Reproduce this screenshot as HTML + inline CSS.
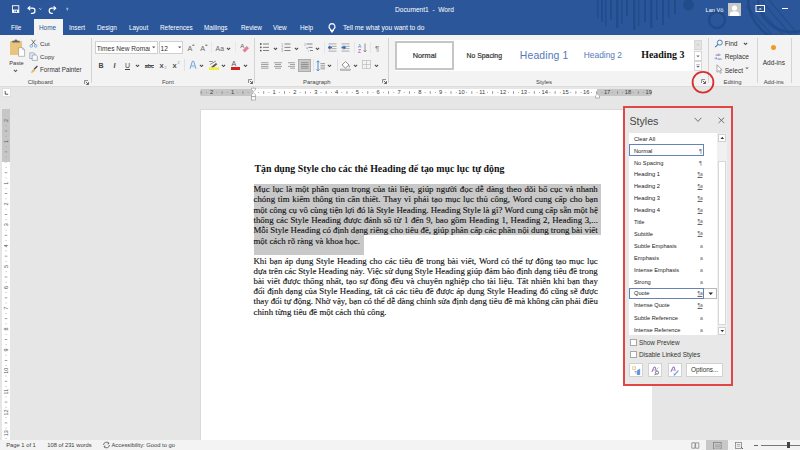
<!DOCTYPE html><html><head><meta charset='utf-8'><style>html,body{margin:0;padding:0}body{width:800px;height:450px;overflow:hidden;position:relative;background:#e6e6e6;font-family:'Liberation Sans',sans-serif}</style></head><body><div style="position:absolute;left:0px;top:0px;width:800px;height:35px;background:#2b579a"></div><svg style="position:absolute;left:560px;top:0px;" width="240" height="35" viewBox="0 0 240 35"><g fill="#214a88" opacity="0.9"><rect x="37" y="0" width="1.5" height="18"/><rect x="41" y="0" width="2" height="22"/><rect x="45" y="0" width="1.5" height="26"/><rect x="50" y="0" width="2" height="20"/><rect x="56" y="0" width="2.5" height="28"/><rect x="61" y="0" width="1.5" height="24"/><rect x="66" y="0" width="2" height="16"/><rect x="73" y="0" width="2.5" height="30"/><rect x="78" y="0" width="1.5" height="26"/><rect x="84" y="0" width="2" height="22"/><rect x="90" y="0" width="2.5" height="28"/><rect x="96" y="0" width="1.5" height="20"/><rect x="102" y="0" width="2" height="25"/><rect x="108" y="0" width="1.5" height="18"/><rect x="114" y="0" width="2" height="14"/><circle cx="128.5" cy="5" r="5.5"/></g><g fill="none" stroke="#214a88" stroke-width="2.5" opacity="0.9"><circle cx="157" cy="20" r="8"/><circle cx="232" cy="-2" r="44"/><circle cx="232" cy="-2" r="34"/></g><g stroke="#214a88" stroke-width="1.3" opacity="0.7"><path d="M186 6l26 29M193 2l30 33M201 0l30 35M209 0l28 33"/></g></svg><svg style="position:absolute;left:11px;top:4px;" width="60" height="11" viewBox="0 0 60 11"><rect x="1.5" y="1.7" width="6.3" height="6.7" fill="none" stroke="#fff" stroke-width="0.9"/><rect x="1.5" y="5.6" width="6.3" height="2.8" fill="#fff"/><rect x="3.4" y="6.5" width="1" height="1.5" fill="#2b579a"/><rect x="5" y="6.5" width="1" height="1.5" fill="#2b579a"/><g fill="none" stroke="#fff" stroke-width="1.2" stroke-linecap="round"><path d="M17.2 4.2h4.2a2.6 2.6 0 0 1 0 5.2h-1"/><path d="M18.8 2.6l-1.6 1.6 1.6 1.6"/></g><path d="M28.3 4.3l1.1 1.1 1.1-1.1" fill="none" stroke="#fff" stroke-width="0.7"/><g fill="none" stroke="#fff" stroke-width="1.2" stroke-linecap="round"><path d="M44.6 4.2h-3.8a2.6 2.6 0 0 0 0 5.2h0.5"/><path d="M43 2.6l1.6 1.6-1.6 1.6"/></g><path d="M55.2 4.3h2.2" stroke="#fff" stroke-width="0.6"/><path d="M55.2 5.4h2.2l-1.1 1.2z" fill="#fff"/></svg><div style="position:absolute;left:395px;top:6.30px;font-family:'Liberation Sans',sans-serif;font-size:6.6px;line-height:7px;color:#fff;font-weight:400;white-space:pre;">Document1  -  Word</div><div style="position:absolute;left:705.6px;top:6.80px;font-family:'Liberation Sans',sans-serif;font-size:5.6px;line-height:6px;color:#fff;font-weight:400;white-space:pre;">Lan Vô</div><div style="position:absolute;left:728px;top:2.5px;width:13px;height:13.5px;background:#c8c8c8"></div><svg style="position:absolute;left:728px;top:2.5px;" width="13" height="13.5" viewBox="0 0 13 13.5"><circle cx="6.5" cy="5" r="2.6" fill="#fff"/><path d="M1.8 13.5v-2.2a4.7 3 0 0 1 9.4 0v2.2z" fill="#fff"/></svg><svg style="position:absolute;left:755px;top:4px;" width="11" height="9" viewBox="0 0 11 9"><rect x="1" y="1.5" width="8.5" height="6" fill="none" stroke="#fff" stroke-width="1"/><path d="M3.5 5.5l1.7-1.5 1.7 1.5z" fill="#fff"/></svg><div style="position:absolute;left:782px;top:8px;width:6px;height:1px;background:#fff"></div><div style="position:absolute;left:34px;top:19px;width:29px;height:16px;background:#f3f3f3"></div><div style="position:absolute;left:11px;top:24.20px;font-family:'Liberation Sans',sans-serif;font-size:6.4px;line-height:7px;color:#fff;font-weight:400;white-space:pre;">File</div><div style="position:absolute;left:39px;top:24.20px;font-family:'Liberation Sans',sans-serif;font-size:6.4px;line-height:7px;color:#2b579a;font-weight:400;white-space:pre;">Home</div><div style="position:absolute;left:69px;top:24.20px;font-family:'Liberation Sans',sans-serif;font-size:6.4px;line-height:7px;color:#fff;font-weight:400;white-space:pre;">Insert</div><div style="position:absolute;left:97px;top:24.20px;font-family:'Liberation Sans',sans-serif;font-size:6.4px;line-height:7px;color:#fff;font-weight:400;white-space:pre;">Design</div><div style="position:absolute;left:129px;top:24.20px;font-family:'Liberation Sans',sans-serif;font-size:6.4px;line-height:7px;color:#fff;font-weight:400;white-space:pre;">Layout</div><div style="position:absolute;left:160px;top:24.20px;font-family:'Liberation Sans',sans-serif;font-size:6.4px;line-height:7px;color:#fff;font-weight:400;white-space:pre;">References</div><div style="position:absolute;left:204px;top:24.20px;font-family:'Liberation Sans',sans-serif;font-size:6.4px;line-height:7px;color:#fff;font-weight:400;white-space:pre;">Mailings</div><div style="position:absolute;left:241px;top:24.20px;font-family:'Liberation Sans',sans-serif;font-size:6.4px;line-height:7px;color:#fff;font-weight:400;white-space:pre;">Review</div><div style="position:absolute;left:273px;top:24.20px;font-family:'Liberation Sans',sans-serif;font-size:6.4px;line-height:7px;color:#fff;font-weight:400;white-space:pre;">View</div><div style="position:absolute;left:300px;top:24.20px;font-family:'Liberation Sans',sans-serif;font-size:6.4px;line-height:7px;color:#fff;font-weight:400;white-space:pre;">Help</div><svg style="position:absolute;left:327px;top:22px;" width="10" height="11" viewBox="0 0 10 11"><path d="M5 1.6a3 3 0 0 0-1.9 5.3c.5.5.6.9.6 1.4h2.6c0-.5.1-.9.6-1.4A3 3 0 0 0 5 1.6z" fill="none" stroke="#fff" stroke-width="1.2"/><path d="M3.8 8.6h2.4v1.2l-0.6 0.6h-1.2l-0.6-0.6z" fill="#fff"/></svg><div style="position:absolute;left:343px;top:24.20px;font-family:'Liberation Sans',sans-serif;font-size:6.6px;line-height:7px;color:#fff;font-weight:400;white-space:pre;">Tell me what you want to do</div><div style="position:absolute;left:0px;top:35px;width:800px;height:51px;background:#f3f3f3"></div><div style="position:absolute;left:0px;top:86px;width:800px;height:1px;background:#dcdcdc"></div><svg style="position:absolute;left:8px;top:39px;" width="18" height="18" viewBox="0 0 18 18"><rect x="2" y="2" width="12" height="14" rx="0.6" fill="#ebc47c"/><path d="M4.2 3.6h7.4v-1.8h-2.2a1.5 1.2 0 0 0-3 0h-2.2z" fill="#666"/><path d="M10.6 8.7h4l2 2v6.6h-6z" fill="#fff" stroke="#8f8f8f" stroke-width="0.6"/><path d="M14.6 8.7v2h2" fill="none" stroke="#8f8f8f" stroke-width="0.5"/></svg><div style="position:absolute;left:9.2px;top:60.00px;font-family:'Liberation Sans',sans-serif;font-size:5.7px;line-height:6px;color:#333;font-weight:400;white-space:pre;">Paste</div><svg style="position:absolute;left:13.3px;top:69.0px;" width="5" height="3.5" viewBox="0 0 5 3.5"><path d="M0.9 0.9l1.6 1.6 1.6-1.6" fill="none" stroke="#555" stroke-width="1.05"/></svg><svg style="position:absolute;left:29px;top:39px;" width="9" height="9" viewBox="0 0 9 9"><path d="M2.6 0.8l3.8 5M6.4 0.8L2.6 5.8" stroke="#555" stroke-width="0.8" fill="none"/><circle cx="2.3" cy="6.9" r="1.3" fill="none" stroke="#5a8fd0" stroke-width="0.7"/><circle cx="6.7" cy="6.9" r="1.3" fill="none" stroke="#5a8fd0" stroke-width="0.7"/></svg><div style="position:absolute;left:40px;top:40.20px;font-family:'Liberation Sans',sans-serif;font-size:6.2px;line-height:7px;color:#333;font-weight:400;white-space:pre;">Cut</div><svg style="position:absolute;left:29px;top:51.5px;" width="9" height="9" viewBox="0 0 9 9"><path d="M0.8 0.8h4l1.2 1.2v4.5H0.8z" fill="#e9eef5" stroke="#7a8aa0" stroke-width="0.6"/><path d="M3.2 3h4l1.2 1.2v4.2H3.2z" fill="#f5f7fa" stroke="#7a8aa0" stroke-width="0.6"/></svg><div style="position:absolute;left:40px;top:52.80px;font-family:'Liberation Sans',sans-serif;font-size:6.2px;line-height:7px;color:#333;font-weight:400;white-space:pre;">Copy</div><svg style="position:absolute;left:29.5px;top:65px;" width="9" height="8" viewBox="0 0 9 8"><path d="M0.8 7.4l2.6-3.6 2 2-3.4 2.2z" fill="#e6bb6a"/><path d="M4.2 4.2l3.2-3.2" stroke="#444" stroke-width="1.3"/></svg><div style="position:absolute;left:40px;top:65.80px;font-family:'Liberation Sans',sans-serif;font-size:6.3px;line-height:7px;color:#333;font-weight:400;white-space:pre;">Format Painter</div><div style="position:absolute;left:27.7px;top:78.50px;font-family:'Liberation Sans',sans-serif;font-size:5.9px;line-height:6px;color:#444;font-weight:400;white-space:pre;">Clipboard</div><svg style="position:absolute;left:84px;top:79.5px;" width="5" height="5" viewBox="0 0 5 5"><path d="M0.5 4V0.5H4" fill="none" stroke="#777" stroke-width="0.8"/><path d="M1.8 1.8L4.3 4.3M4.5 2.2v2.3H2.2" fill="none" stroke="#555" stroke-width="0.9"/></svg><div style="position:absolute;left:90.5px;top:38px;width:1px;height:45px;background:#d4d4d4"></div><div style="position:absolute;left:95.4px;top:41.4px;width:62.4px;height:12.8px;background:#fff;border:1px solid #d0d0d0;box-sizing:border-box"></div><div style="position:absolute;left:96.5px;top:43px;width:53.5px;height:10px;overflow:hidden"><div style="position:absolute;left:0.3px;top:1.80px;font-family:'Liberation Sans',sans-serif;font-size:6.6px;line-height:7px;color:#333;font-weight:400;white-space:pre;">Times New Roman</div></div><svg style="position:absolute;left:152px;top:46px;" width="4" height="3" viewBox="0 0 4 3"><path d="M0 0.5h3.4L1.7 2.3z" fill="#555"/></svg><div style="position:absolute;left:159px;top:41.4px;width:23.6px;height:12.8px;background:#fff;border:1px solid #d0d0d0;box-sizing:border-box"></div><div style="position:absolute;left:160.5px;top:44.80px;font-family:'Liberation Sans',sans-serif;font-size:6.6px;line-height:7px;color:#333;font-weight:400;white-space:pre;">12</div><svg style="position:absolute;left:177.5px;top:46px;" width="4" height="3" viewBox="0 0 4 3"><path d="M0 0.5h3.4L1.7 2.3z" fill="#555"/></svg><div style="position:absolute;left:187.4px;top:44.00px;font-family:'Liberation Sans',sans-serif;font-size:7.2px;line-height:9px;color:#6a6a6a;font-weight:400;white-space:pre;">A</div><svg style="position:absolute;left:191.5px;top:43.5px;" width="3" height="3" viewBox="0 0 3 3"><path d="M0.4 1.2h2" stroke="#444" stroke-width="0.9"/></svg><div style="position:absolute;left:200.3px;top:44.00px;font-family:'Liberation Sans',sans-serif;font-size:7.2px;line-height:9px;color:#6a6a6a;font-weight:400;white-space:pre;">A</div><svg style="position:absolute;left:204.5px;top:43.5px;" width="3" height="3" viewBox="0 0 3 3"><path d="M0.4 1.2h2" stroke="#444" stroke-width="0.9"/></svg><div style="position:absolute;left:210.8px;top:42px;width:1px;height:11px;background:#e8e8e8"></div><div style="position:absolute;left:215.6px;top:44.80px;font-family:'Liberation Sans',sans-serif;font-size:6.8px;line-height:7px;color:#6a6a6a;font-weight:400;white-space:pre;">Aa</div><svg style="position:absolute;left:225.5px;top:47.0px;" width="5" height="3.5" viewBox="0 0 5 3.5"><path d="M0.9 0.9l1.6 1.6 1.6-1.6" fill="none" stroke="#444" stroke-width="1.05"/></svg><div style="position:absolute;left:235.4px;top:42px;width:1px;height:11px;background:#e8e8e8"></div><svg style="position:absolute;left:239.5px;top:41.5px;" width="10" height="11" viewBox="0 0 10 11"><text x="0.3" y="5.8" font-family="Liberation Sans" font-size="6" fill="#555">A</text><path d="M2.5 8.2l4.2-4.2 2.3 2.3-4.2 4.2z" fill="#e57f98"/></svg><div style="position:absolute;left:98.5px;top:61.80px;font-family:'Liberation Sans',sans-serif;font-size:7px;line-height:7px;color:#444;font-weight:700;white-space:pre;">B</div><div style="position:absolute;left:113.5px;top:61.80px;font-family:'Liberation Sans',sans-serif;font-size:7px;line-height:7px;color:#444;font-weight:700;white-space:pre;font-style:italic">I</div><div style="position:absolute;left:125px;top:61.80px;font-family:'Liberation Sans',sans-serif;font-size:7px;line-height:7px;color:#444;font-weight:400;white-space:pre;">U</div><div style="position:absolute;left:125px;top:69px;width:5px;height:0.8px;background:#444"></div><svg style="position:absolute;left:135.0px;top:63.5px;" width="5" height="3.5" viewBox="0 0 5 3.5"><path d="M0.9 0.9l1.6 1.6 1.6-1.6" fill="none" stroke="#444" stroke-width="1.05"/></svg><div style="position:absolute;left:144.8px;top:62.60px;font-family:'Liberation Sans',sans-serif;font-size:5.4px;line-height:6px;color:#444;font-weight:700;white-space:pre;">abc</div><div style="position:absolute;left:144.8px;top:65.2px;width:9px;height:0.7px;background:#555"></div><div style="position:absolute;left:159.5px;top:61.60px;font-family:'Liberation Sans',sans-serif;font-size:6.2px;line-height:7px;color:#444;font-weight:700;white-space:pre;">X</div><div style="position:absolute;left:164.5px;top:66.20px;font-family:'Liberation Sans',sans-serif;font-size:3.6px;line-height:4px;color:#888;font-weight:400;white-space:pre;">2</div><div style="position:absolute;left:172.5px;top:61.60px;font-family:'Liberation Sans',sans-serif;font-size:6.2px;line-height:7px;color:#444;font-weight:700;white-space:pre;">X</div><div style="position:absolute;left:177.5px;top:61.00px;font-family:'Liberation Sans',sans-serif;font-size:3.6px;line-height:4px;color:#888;font-weight:400;white-space:pre;">2</div><div style="position:absolute;left:184.4px;top:59px;width:1px;height:12px;background:#e0e0e0"></div><svg style="position:absolute;left:188.5px;top:60px;" width="8" height="10" viewBox="0 0 8 10"><path d="M1 8.8L3.3 1.2h1.4L7 8.8" fill="#e4eefa" stroke="#5a8fd0" stroke-width="0.8"/><path d="M2.3 6h3.4" stroke="#5a8fd0" stroke-width="0.7"/></svg><svg style="position:absolute;left:198.5px;top:63.5px;" width="5" height="3.5" viewBox="0 0 5 3.5"><path d="M0.9 0.9l1.6 1.6 1.6-1.6" fill="none" stroke="#444" stroke-width="1.05"/></svg><svg style="position:absolute;left:207.5px;top:60px;" width="11" height="11" viewBox="0 0 11 11"><path d="M1 1.5h4M2 4.5l6-3.5" stroke="#666" stroke-width="0.7"/><path d="M3 7l5-4 1.3 1.3-4.5 3.7z" fill="#555"/><rect x="1" y="7.3" width="10" height="2.7" fill="#f2ee3a"/></svg><svg style="position:absolute;left:221.0px;top:63.5px;" width="5" height="3.5" viewBox="0 0 5 3.5"><path d="M0.9 0.9l1.6 1.6 1.6-1.6" fill="none" stroke="#444" stroke-width="1.05"/></svg><div style="position:absolute;left:231.5px;top:60.00px;font-family:'Liberation Sans',sans-serif;font-size:7px;line-height:7px;color:#555;font-weight:400;white-space:pre;">A</div><div style="position:absolute;left:230.5px;top:67.3px;width:9px;height:2.3px;background:#d32020"></div><svg style="position:absolute;left:242.5px;top:63.5px;" width="5" height="3.5" viewBox="0 0 5 3.5"><path d="M0.9 0.9l1.6 1.6 1.6-1.6" fill="none" stroke="#444" stroke-width="1.05"/></svg><div style="position:absolute;left:162px;top:78.50px;font-family:'Liberation Sans',sans-serif;font-size:5.9px;line-height:6px;color:#444;font-weight:400;white-space:pre;">Font</div><svg style="position:absolute;left:247.5px;top:79px;" width="5" height="5" viewBox="0 0 5 5"><path d="M0.5 4V0.5H4" fill="none" stroke="#777" stroke-width="0.8"/><path d="M1.8 1.8L4.3 4.3M4.5 2.2v2.3H2.2" fill="none" stroke="#555" stroke-width="0.9"/></svg><div style="position:absolute;left:254px;top:38px;width:1px;height:45px;background:#d4d4d4"></div><svg style="position:absolute;left:259px;top:42px;" width="12" height="11" viewBox="0 0 12 11"><circle cx="1.8" cy="2" r="0.9" fill="#555"/><circle cx="1.8" cy="5.3" r="0.9" fill="#555"/><circle cx="1.8" cy="8.6" r="0.9" fill="#555"/><rect x="4" y="1.6" width="6" height="0.8" fill="#666"/><rect x="4" y="4.9" width="6" height="0.8" fill="#666"/><rect x="4" y="8.2" width="6" height="0.8" fill="#666"/></svg><svg style="position:absolute;left:272.5px;top:47.0px;" width="5" height="3.5" viewBox="0 0 5 3.5"><path d="M0.9 0.9l1.6 1.6 1.6-1.6" fill="none" stroke="#444" stroke-width="1.05"/></svg><svg style="position:absolute;left:281px;top:42px;" width="12" height="11" viewBox="0 0 12 11"><text x="0.3" y="3.8" font-size="3.2" font-family="Liberation Sans" fill="#888">1</text><text x="0.3" y="7.1" font-size="3.2" font-family="Liberation Sans" fill="#888">2</text><text x="0.3" y="10.4" font-size="3.2" font-family="Liberation Sans" fill="#888">3</text><rect x="3.5" y="1.6" width="6" height="0.8" fill="#666"/><rect x="3.5" y="4.9" width="6" height="0.8" fill="#666"/><rect x="3.5" y="8.2" width="6" height="0.8" fill="#666"/></svg><svg style="position:absolute;left:294.0px;top:47.0px;" width="5" height="3.5" viewBox="0 0 5 3.5"><path d="M0.9 0.9l1.6 1.6 1.6-1.6" fill="none" stroke="#444" stroke-width="1.05"/></svg><svg style="position:absolute;left:303.5px;top:42px;" width="10" height="11" viewBox="0 0 10 11"><text x="0" y="3.8" font-size="3.2" font-family="Liberation Sans" fill="#4a7fc0">1</text><text x="2" y="7.1" font-size="3.2" font-family="Liberation Sans" fill="#4a7fc0">a</text><text x="4" y="10.4" font-size="3.2" font-family="Liberation Sans" fill="#888">i</text><rect x="2.5" y="1.6" width="6" height="0.8" fill="#666"/><rect x="4.5" y="4.9" width="4" height="0.8" fill="#666"/><rect x="6" y="8.2" width="3" height="0.8" fill="#666"/></svg><svg style="position:absolute;left:314.5px;top:47.0px;" width="5" height="3.5" viewBox="0 0 5 3.5"><path d="M0.9 0.9l1.6 1.6 1.6-1.6" fill="none" stroke="#444" stroke-width="1.05"/></svg><div style="position:absolute;left:324.4px;top:42px;width:1px;height:11px;background:#e6e6e6"></div><svg style="position:absolute;left:327.5px;top:43px;" width="9" height="9" viewBox="0 0 9 9"><rect x="0.5" y="0.5" width="8" height="0.8" fill="#999"/><rect x="0.5" y="2.9" width="8" height="0.8" fill="#999"/><rect x="0.5" y="5.3" width="8" height="0.8" fill="#999"/><rect x="0.5" y="7.699999999999999" width="8" height="0.8" fill="#999"/><path d="M0.5 4.5h3.5M2.2 2.8L0.5 4.5l1.7 1.7" stroke="#2f6fbe" stroke-width="1.2" fill="none"/></svg><svg style="position:absolute;left:340.5px;top:43px;" width="9" height="9" viewBox="0 0 9 9"><rect x="0.5" y="0.5" width="8" height="0.8" fill="#999"/><rect x="0.5" y="2.9" width="8" height="0.8" fill="#999"/><rect x="0.5" y="5.3" width="8" height="0.8" fill="#999"/><rect x="0.5" y="7.699999999999999" width="8" height="0.8" fill="#999"/><path d="M0.5 4.5h3.5M2.5 2.8l1.7 1.7-1.7 1.7" stroke="#2f6fbe" stroke-width="1.2" fill="none"/></svg><div style="position:absolute;left:354.2px;top:42px;width:1px;height:11px;background:#e6e6e6"></div><svg style="position:absolute;left:358px;top:42.5px;" width="9" height="10" viewBox="0 0 9 10"><text x="0" y="4.5" font-size="4.8" font-family="Liberation Sans" fill="#3f7fc6">A</text><text x="0" y="9.5" font-size="4.8" font-family="Liberation Sans" fill="#a050b0">Z</text><path d="M7 0.5v8.3M5.6 7.2l1.4 1.6 1.4-1.6" stroke="#666" stroke-width="0.7" fill="none"/></svg><div style="position:absolute;left:370.4px;top:42px;width:1px;height:11px;background:#e6e6e6"></div><div style="position:absolute;left:375px;top:44.00px;font-family:'Liberation Sans',sans-serif;font-size:8px;line-height:9px;color:#888;font-weight:400;white-space:pre;">¶</div><svg style="position:absolute;left:260.5px;top:61.5px;" width="8" height="7" viewBox="0 0 8 7"><rect x="0" y="0.3" width="7.5" height="0.9" fill="#999"/><rect x="0" y="2.1" width="7.5" height="0.9" fill="#999"/><rect x="0" y="3.9" width="7.5" height="0.9" fill="#999"/><rect x="0" y="5.7" width="7.5" height="0.9" fill="#999"/></svg><svg style="position:absolute;left:273.5px;top:61.5px;" width="9" height="7" viewBox="0 0 9 7"><rect x="0" y="0.3" width="8" height="0.9" fill="#999"/><rect x="1" y="2.1" width="6" height="0.9" fill="#999"/><rect x="0" y="3.9" width="8" height="0.9" fill="#999"/><rect x="1" y="5.7" width="6" height="0.9" fill="#999"/></svg><svg style="position:absolute;left:287.5px;top:61.5px;" width="8" height="7" viewBox="0 0 8 7"><rect x="0" y="0.3" width="7" height="0.9" fill="#999"/><rect x="2" y="2.1" width="5" height="0.9" fill="#999"/><rect x="0" y="3.9" width="7" height="0.9" fill="#999"/><rect x="2" y="5.7" width="5" height="0.9" fill="#999"/></svg><div style="position:absolute;left:298px;top:58.6px;width:13px;height:13.2px;background:#c8c8c8;border:1px solid #acacac;box-sizing:border-box"></div><svg style="position:absolute;left:300.5px;top:61.5px;" width="8" height="7" viewBox="0 0 8 7"><rect x="0" y="0.3" width="7.5" height="0.9" fill="#8a8a8a"/><rect x="0" y="2.1" width="7.5" height="0.9" fill="#8a8a8a"/><rect x="0" y="3.9" width="7.5" height="0.9" fill="#8a8a8a"/><rect x="0" y="5.7" width="7.5" height="0.9" fill="#8a8a8a"/></svg><div style="position:absolute;left:313px;top:59px;width:1px;height:12px;background:#e0e0e0"></div><svg style="position:absolute;left:316px;top:59.5px;" width="10" height="12" viewBox="0 0 10 12"><path d="M2 0.8v10M0.5 2.3L2 0.8l1.5 1.5M0.5 9.3L2 10.8l1.5-1.5" stroke="#3f7fc6" stroke-width="0.9" fill="none"/><rect x="4.5" y="3.0" width="4.5" height="0.9" fill="#999"/><rect x="4.5" y="4.8" width="4.5" height="0.9" fill="#999"/><rect x="4.5" y="6.6" width="4.5" height="0.9" fill="#999"/><rect x="4.5" y="8.4" width="4.5" height="0.9" fill="#999"/></svg><svg style="position:absolute;left:327.0px;top:63.5px;" width="5" height="3.5" viewBox="0 0 5 3.5"><path d="M0.9 0.9l1.6 1.6 1.6-1.6" fill="none" stroke="#444" stroke-width="1.05"/></svg><div style="position:absolute;left:336.8px;top:59px;width:1px;height:12px;background:#e0e0e0"></div><svg style="position:absolute;left:340px;top:59.5px;" width="11" height="11" viewBox="0 0 11 11"><path d="M2 5l3.5-3.5 3.5 3.5-3.5 3z" fill="#fff" stroke="#666" stroke-width="0.7"/><path d="M9.3 5.5v1.8" stroke="#666" stroke-width="0.7"/><rect x="0.5" y="9" width="10" height="1.5" fill="#ccc" stroke="#888" stroke-width="0.4"/></svg><svg style="position:absolute;left:352.5px;top:63.5px;" width="5" height="3.5" viewBox="0 0 5 3.5"><path d="M0.9 0.9l1.6 1.6 1.6-1.6" fill="none" stroke="#444" stroke-width="1.05"/></svg><svg style="position:absolute;left:362px;top:60px;" width="9" height="9" viewBox="0 0 9 9"><rect x="0.5" y="0.5" width="8" height="8" fill="none" stroke="#bbb" stroke-width="0.7"/><path d="M4.5 0.5v8M0.5 4.5h8" stroke="#bbb" stroke-width="0.7"/></svg><svg style="position:absolute;left:374.0px;top:63.5px;" width="5" height="3.5" viewBox="0 0 5 3.5"><path d="M0.9 0.9l1.6 1.6 1.6-1.6" fill="none" stroke="#444" stroke-width="1.05"/></svg><div style="position:absolute;left:303px;top:78.50px;font-family:'Liberation Sans',sans-serif;font-size:5.9px;line-height:6px;color:#444;font-weight:400;white-space:pre;">Paragraph</div><svg style="position:absolute;left:382.3px;top:79px;" width="5" height="5" viewBox="0 0 5 5"><path d="M0.5 4V0.5H4" fill="none" stroke="#777" stroke-width="0.8"/><path d="M1.8 1.8L4.3 4.3M4.5 2.2v2.3H2.2" fill="none" stroke="#555" stroke-width="0.9"/></svg><div style="position:absolute;left:388.4px;top:38px;width:1px;height:45px;background:#d4d4d4"></div><div style="position:absolute;left:394.5px;top:39.5px;width:299px;height:31px;background:#fff"></div><div style="position:absolute;left:394.6px;top:40.5px;width:59.4px;height:29.5px;border:2px solid #c6c6c6;box-sizing:border-box;background:#fff"></div><div style="position:absolute;left:412.8px;top:50.80px;font-family:'Liberation Sans',sans-serif;font-size:7.3px;line-height:9px;color:#333;font-weight:400;white-space:pre;-webkit-text-stroke:0.2px #333">Normal</div><div style="position:absolute;left:466.6px;top:51.80px;font-family:'Liberation Sans',sans-serif;font-size:6.85px;line-height:7px;color:#333;font-weight:400;white-space:pre;-webkit-text-stroke:0.2px #333">No Spacing</div><div style="position:absolute;left:519.8px;top:50.20px;font-family:'Liberation Sans',sans-serif;font-size:10.4px;line-height:11px;color:#5479bb;font-weight:400;white-space:pre;letter-spacing:0.15px">Heading 1</div><div style="position:absolute;left:583.8px;top:50.20px;font-family:'Liberation Sans',sans-serif;font-size:8.4px;line-height:10px;color:#5479bb;font-weight:400;white-space:pre;">Heading 2</div><div style="position:absolute;left:641.2px;top:49.20px;font-family:'Liberation Serif',serif;font-size:9.95px;line-height:11px;color:#111;font-weight:700;white-space:pre;">Heading 3</div><div style="position:absolute;left:693.5px;top:39.5px;width:8px;height:10.5px;background:#e3e3e3;border:1px solid #d6d6d6;box-sizing:border-box"></div><div style="position:absolute;left:693.5px;top:50.5px;width:8px;height:10.5px;background:#fff;border:1px solid #d6d6d6;box-sizing:border-box"></div><div style="position:absolute;left:693.5px;top:61.3px;width:8px;height:9.5px;background:#fff;border:1px solid #d6d6d6;box-sizing:border-box"></div><svg style="position:absolute;left:695.5px;top:43px;" width="4" height="3" viewBox="0 0 4 3"><path d="M0.3 2.2L2 0.5 3.7 2.2z" fill="#c8c8c8"/></svg><svg style="position:absolute;left:695.5px;top:55px;" width="4" height="3" viewBox="0 0 4 3"><path d="M0.3 0.5h3.4L2 2.2z" fill="#666"/></svg><svg style="position:absolute;left:695.5px;top:63.5px;" width="4" height="5" viewBox="0 0 4 5"><path d="M0.3 0.8h3.4" stroke="#666" stroke-width="0.6"/><path d="M0.3 2h3.4L2 3.8z" fill="#666"/></svg><div style="position:absolute;left:536px;top:78.50px;font-family:'Liberation Sans',sans-serif;font-size:5.9px;line-height:6px;color:#444;font-weight:400;white-space:pre;">Styles</div><svg style="position:absolute;left:701px;top:79px;" width="5" height="5" viewBox="0 0 5 5"><path d="M0.5 4V0.5H4" fill="none" stroke="#777" stroke-width="0.8"/><path d="M1.8 1.8L4.3 4.3M4.5 2.2v2.3H2.2" fill="none" stroke="#555" stroke-width="0.9"/></svg><div style="position:absolute;left:707.8px;top:38px;width:1px;height:45px;background:#d4d4d4"></div><svg style="position:absolute;left:714px;top:39px;" width="10" height="9" viewBox="0 0 10 9"><circle cx="5.8" cy="3.6" r="2.5" fill="none" stroke="#3a78c0" stroke-width="0.9"/><path d="M4 5.4L1.2 8.1" stroke="#3a78c0" stroke-width="1.1"/></svg><div style="position:absolute;left:724.7px;top:39.80px;font-family:'Liberation Sans',sans-serif;font-size:6.6px;line-height:7px;color:#333;font-weight:400;white-space:pre;">Find</div><svg style="position:absolute;left:742.5px;top:42.0px;" width="5" height="3.5" viewBox="0 0 5 3.5"><path d="M0.9 0.9l1.6 1.6 1.6-1.6" fill="none" stroke="#444" stroke-width="1.05"/></svg><svg style="position:absolute;left:713.5px;top:51.5px;" width="10" height="9" viewBox="0 0 10 9"><text x="1.5" y="3.8" font-size="4.4" font-family="Liberation Sans" fill="#7a5aa0">ab</text><text x="3.6" y="8.4" font-size="4.4" font-family="Liberation Sans" fill="#3a78c0">ac</text><path d="M0.6 6.3h2.4M2 5.2l1 1.1-1 1.1" stroke="#3a78c0" stroke-width="0.6" fill="none"/></svg><div style="position:absolute;left:724.7px;top:53.40px;font-family:'Liberation Sans',sans-serif;font-size:6.6px;line-height:7px;color:#333;font-weight:400;white-space:pre;">Replace</div><svg style="position:absolute;left:715.5px;top:64px;" width="7" height="10" viewBox="0 0 7 10"><path d="M1 0.8v7.5l1.8-1.7 1.5 2.7 1-0.5-1.4-2.6 2.3-0.2z" fill="#fff" stroke="#777" stroke-width="0.6"/></svg><div style="position:absolute;left:724.7px;top:66.50px;font-family:'Liberation Sans',sans-serif;font-size:6.6px;line-height:7px;color:#333;font-weight:400;white-space:pre;">Select</div><svg style="position:absolute;left:744.5px;top:67px;" width="4" height="3" viewBox="0 0 4 3"><path d="M0.3 0.5h3.4L2 2.2z" fill="#666"/></svg><div style="position:absolute;left:723.5px;top:78.50px;font-family:'Liberation Sans',sans-serif;font-size:5.9px;line-height:6px;color:#444;font-weight:400;white-space:pre;">Editing</div><div style="position:absolute;left:756.7px;top:38px;width:1px;height:45px;background:#d4d4d4"></div><div style="position:absolute;left:770.7px;top:44.5px;width:5.2px;height:5.2px;border-radius:50%;background:#f39a21"></div><div style="position:absolute;left:762.7px;top:58.70px;font-family:'Liberation Sans',sans-serif;font-size:6.6px;line-height:7px;color:#333;font-weight:400;white-space:pre;">Add-ins</div><div style="position:absolute;left:763.7px;top:78.50px;font-family:'Liberation Sans',sans-serif;font-size:5.9px;line-height:6px;color:#444;font-weight:400;white-space:pre;">Add-ins</div><div style="position:absolute;left:790.7px;top:38px;width:1px;height:45px;background:#d4d4d4"></div><div style="position:absolute;left:0px;top:87px;width:800px;height:353px;background:#e6e6e6"></div><div style="position:absolute;left:200px;top:109px;width:452px;height:331px;background:#fff;border-top:1px solid #d9d9d9;border-left:1px solid #d9d9d9;box-sizing:border-box"></div><div style="position:absolute;left:1.5px;top:87.6px;width:9.3px;height:9.6px;background:#fff;border:1px solid #e0e0e0;box-sizing:border-box"></div><svg style="position:absolute;left:3.5px;top:90.2px;" width="5" height="6" viewBox="0 0 5 6"><path d="M1.2 1v3.2h3" fill="none" stroke="#444" stroke-width="0.9"/></svg><div style="position:absolute;left:200px;top:89.1px;width:53px;height:6.7px;background:#c6c6c6;border-radius:1.5px 0 0 1.5px"></div><div style="position:absolute;left:253px;top:89.1px;width:344px;height:6.7px;background:#fff"></div><div style="position:absolute;left:597px;top:89.1px;width:55px;height:6.7px;background:#c6c6c6;border-radius:0 3px 3px 0"></div><svg style="position:absolute;left:200px;top:89.1px;" width="452" height="6.7" viewBox="0 0 452 6.7"><rect x="0.42" y="2.2" width="0.9" height="2.6" fill="#888"/><rect x="5.64" y="3.1" width="0.9" height="0.9" fill="#999"/><text x="11.30" y="5.4" font-size="5.8" font-family="Liberation Sans" fill="#3a3a3a" text-anchor="middle">2</text><rect x="16.06" y="3.1" width="0.9" height="0.9" fill="#999"/><rect x="21.27" y="2.2" width="0.9" height="2.6" fill="#888"/><rect x="26.49" y="3.1" width="0.9" height="0.9" fill="#999"/><text x="32.15" y="5.4" font-size="5.8" font-family="Liberation Sans" fill="#3a3a3a" text-anchor="middle">1</text><rect x="36.91" y="3.1" width="0.9" height="0.9" fill="#999"/><rect x="42.12" y="2.2" width="0.9" height="2.6" fill="#888"/><rect x="47.34" y="3.1" width="0.9" height="0.9" fill="#999"/><rect x="57.76" y="3.1" width="0.9" height="0.9" fill="#999"/><rect x="62.98" y="2.2" width="0.9" height="2.6" fill="#888"/><rect x="68.19" y="3.1" width="0.9" height="0.9" fill="#999"/><text x="73.85" y="5.4" font-size="5.8" font-family="Liberation Sans" fill="#3a3a3a" text-anchor="middle">1</text><rect x="78.61" y="3.1" width="0.9" height="0.9" fill="#999"/><rect x="83.82" y="2.2" width="0.9" height="2.6" fill="#888"/><rect x="89.04" y="3.1" width="0.9" height="0.9" fill="#999"/><text x="94.70" y="5.4" font-size="5.8" font-family="Liberation Sans" fill="#3a3a3a" text-anchor="middle">2</text><rect x="99.46" y="3.1" width="0.9" height="0.9" fill="#999"/><rect x="104.67" y="2.2" width="0.9" height="2.6" fill="#888"/><rect x="109.89" y="3.1" width="0.9" height="0.9" fill="#999"/><text x="115.55" y="5.4" font-size="5.8" font-family="Liberation Sans" fill="#3a3a3a" text-anchor="middle">3</text><rect x="120.31" y="3.1" width="0.9" height="0.9" fill="#999"/><rect x="125.53" y="2.2" width="0.9" height="2.6" fill="#888"/><rect x="130.74" y="3.1" width="0.9" height="0.9" fill="#999"/><text x="136.40" y="5.4" font-size="5.8" font-family="Liberation Sans" fill="#3a3a3a" text-anchor="middle">4</text><rect x="141.16" y="3.1" width="0.9" height="0.9" fill="#999"/><rect x="146.38" y="2.2" width="0.9" height="2.6" fill="#888"/><rect x="151.59" y="3.1" width="0.9" height="0.9" fill="#999"/><text x="157.25" y="5.4" font-size="5.8" font-family="Liberation Sans" fill="#3a3a3a" text-anchor="middle">5</text><rect x="162.01" y="3.1" width="0.9" height="0.9" fill="#999"/><rect x="167.23" y="2.2" width="0.9" height="2.6" fill="#888"/><rect x="172.44" y="3.1" width="0.9" height="0.9" fill="#999"/><text x="178.10" y="5.4" font-size="5.8" font-family="Liberation Sans" fill="#3a3a3a" text-anchor="middle">6</text><rect x="182.86" y="3.1" width="0.9" height="0.9" fill="#999"/><rect x="188.07" y="2.2" width="0.9" height="2.6" fill="#888"/><rect x="193.29" y="3.1" width="0.9" height="0.9" fill="#999"/><text x="198.95" y="5.4" font-size="5.8" font-family="Liberation Sans" fill="#3a3a3a" text-anchor="middle">7</text><rect x="203.71" y="3.1" width="0.9" height="0.9" fill="#999"/><rect x="208.93" y="2.2" width="0.9" height="2.6" fill="#888"/><rect x="214.14" y="3.1" width="0.9" height="0.9" fill="#999"/><text x="219.80" y="5.4" font-size="5.8" font-family="Liberation Sans" fill="#3a3a3a" text-anchor="middle">8</text><rect x="224.56" y="3.1" width="0.9" height="0.9" fill="#999"/><rect x="229.78" y="2.2" width="0.9" height="2.6" fill="#888"/><rect x="234.99" y="3.1" width="0.9" height="0.9" fill="#999"/><text x="240.65" y="5.4" font-size="5.8" font-family="Liberation Sans" fill="#3a3a3a" text-anchor="middle">9</text><rect x="245.41" y="3.1" width="0.9" height="0.9" fill="#999"/><rect x="250.63" y="2.2" width="0.9" height="2.6" fill="#888"/><rect x="255.84" y="3.1" width="0.9" height="0.9" fill="#999"/><text x="261.50" y="5.4" font-size="5.8" font-family="Liberation Sans" fill="#3a3a3a" text-anchor="middle">10</text><rect x="266.26" y="3.1" width="0.9" height="0.9" fill="#999"/><rect x="271.48" y="2.2" width="0.9" height="2.6" fill="#888"/><rect x="276.69" y="3.1" width="0.9" height="0.9" fill="#999"/><text x="282.35" y="5.4" font-size="5.8" font-family="Liberation Sans" fill="#3a3a3a" text-anchor="middle">11</text><rect x="287.11" y="3.1" width="0.9" height="0.9" fill="#999"/><rect x="292.32" y="2.2" width="0.9" height="2.6" fill="#888"/><rect x="297.54" y="3.1" width="0.9" height="0.9" fill="#999"/><text x="303.20" y="5.4" font-size="5.8" font-family="Liberation Sans" fill="#3a3a3a" text-anchor="middle">12</text><rect x="307.96" y="3.1" width="0.9" height="0.9" fill="#999"/><rect x="313.18" y="2.2" width="0.9" height="2.6" fill="#888"/><rect x="318.39" y="3.1" width="0.9" height="0.9" fill="#999"/><text x="324.05" y="5.4" font-size="5.8" font-family="Liberation Sans" fill="#3a3a3a" text-anchor="middle">13</text><rect x="328.81" y="3.1" width="0.9" height="0.9" fill="#999"/><rect x="334.03" y="2.2" width="0.9" height="2.6" fill="#888"/><rect x="339.24" y="3.1" width="0.9" height="0.9" fill="#999"/><text x="344.90" y="5.4" font-size="5.8" font-family="Liberation Sans" fill="#3a3a3a" text-anchor="middle">14</text><rect x="349.66" y="3.1" width="0.9" height="0.9" fill="#999"/><rect x="354.88" y="2.2" width="0.9" height="2.6" fill="#888"/><rect x="360.09" y="3.1" width="0.9" height="0.9" fill="#999"/><text x="365.75" y="5.4" font-size="5.8" font-family="Liberation Sans" fill="#3a3a3a" text-anchor="middle">15</text><rect x="370.51" y="3.1" width="0.9" height="0.9" fill="#999"/><rect x="375.72" y="2.2" width="0.9" height="2.6" fill="#888"/><rect x="380.94" y="3.1" width="0.9" height="0.9" fill="#999"/><text x="386.60" y="5.4" font-size="5.8" font-family="Liberation Sans" fill="#3a3a3a" text-anchor="middle">16</text><rect x="391.36" y="3.1" width="0.9" height="0.9" fill="#999"/><rect x="396.58" y="2.2" width="0.9" height="2.6" fill="#888"/><rect x="401.79" y="3.1" width="0.9" height="0.9" fill="#999"/><text x="407.45" y="5.4" font-size="5.8" font-family="Liberation Sans" fill="#3a3a3a" text-anchor="middle">17</text><rect x="412.21" y="3.1" width="0.9" height="0.9" fill="#999"/><rect x="417.43" y="2.2" width="0.9" height="2.6" fill="#888"/><rect x="422.64" y="3.1" width="0.9" height="0.9" fill="#999"/><text x="428.30" y="5.4" font-size="5.8" font-family="Liberation Sans" fill="#3a3a3a" text-anchor="middle">18</text><rect x="433.06" y="3.1" width="0.9" height="0.9" fill="#999"/><rect x="438.28" y="2.2" width="0.9" height="2.6" fill="#888"/><rect x="443.49" y="3.1" width="0.9" height="0.9" fill="#999"/><text x="449.15" y="5.4" font-size="5.8" font-family="Liberation Sans" fill="#3a3a3a" text-anchor="middle">19</text></svg><svg style="position:absolute;left:250px;top:86.5px;" width="7" height="14" viewBox="0 0 7 14"><path d="M1.5 1.2h4v1.6L3.5 4.6 1.5 2.8z" fill="#fff" stroke="#8a8a8a" stroke-width="0.6"/><path d="M1.5 9.8V7.6l2-1.8 2 1.8v2.2z" fill="#fff" stroke="#8a8a8a" stroke-width="0.6"/><rect x="1.5" y="9.8" width="4" height="3.2" fill="#fff" stroke="#8a8a8a" stroke-width="0.6"/></svg><svg style="position:absolute;left:594px;top:92px;" width="7" height="7" viewBox="0 0 7 7"><path d="M1.5 6V3.8l2-1.8 2 1.8V6z" fill="#fff" stroke="#8a8a8a" stroke-width="0.6"/></svg><div style="position:absolute;left:2px;top:109px;width:8px;height:53px;background:#c6c6c6"></div><div style="position:absolute;left:2px;top:162px;width:8px;height:278px;background:#fff"></div><svg style="position:absolute;left:2px;top:108.5px;" width="8" height="332" viewBox="0 0 8 332"><text x="0" y="0" font-size="5.4" font-family="Liberation Sans" fill="#555" text-anchor="middle" transform="translate(4.1 11.60) rotate(-90) translate(0 1.9)">2</text><rect x="3.6" y="16.41" width="0.9" height="0.8" fill="#9a9a9a"/><rect x="2.7" y="21.63" width="2.6" height="0.8" fill="#8a8a8a"/><rect x="3.6" y="26.84" width="0.9" height="0.8" fill="#9a9a9a"/><text x="0" y="0" font-size="5.4" font-family="Liberation Sans" fill="#555" text-anchor="middle" transform="translate(4.1 32.45) rotate(-90) translate(0 1.9)">1</text><rect x="3.6" y="37.26" width="0.9" height="0.8" fill="#9a9a9a"/><rect x="2.7" y="42.48" width="2.6" height="0.8" fill="#8a8a8a"/><rect x="3.6" y="47.69" width="0.9" height="0.8" fill="#9a9a9a"/><rect x="3.6" y="52.90" width="0.9" height="0.8" fill="#9a9a9a"/><rect x="3.6" y="58.11" width="0.9" height="0.8" fill="#9a9a9a"/><rect x="2.7" y="63.33" width="2.6" height="0.8" fill="#8a8a8a"/><rect x="3.6" y="68.54" width="0.9" height="0.8" fill="#9a9a9a"/><text x="0" y="0" font-size="5.4" font-family="Liberation Sans" fill="#555" text-anchor="middle" transform="translate(4.1 74.15) rotate(-90) translate(0 1.9)">1</text><rect x="3.6" y="78.96" width="0.9" height="0.8" fill="#9a9a9a"/><rect x="2.7" y="84.18" width="2.6" height="0.8" fill="#8a8a8a"/><rect x="3.6" y="89.39" width="0.9" height="0.8" fill="#9a9a9a"/><text x="0" y="0" font-size="5.4" font-family="Liberation Sans" fill="#555" text-anchor="middle" transform="translate(4.1 95.00) rotate(-90) translate(0 1.9)">2</text><rect x="3.6" y="99.81" width="0.9" height="0.8" fill="#9a9a9a"/><rect x="2.7" y="105.03" width="2.6" height="0.8" fill="#8a8a8a"/><rect x="3.6" y="110.24" width="0.9" height="0.8" fill="#9a9a9a"/><text x="0" y="0" font-size="5.4" font-family="Liberation Sans" fill="#555" text-anchor="middle" transform="translate(4.1 115.85) rotate(-90) translate(0 1.9)">3</text><rect x="3.6" y="120.66" width="0.9" height="0.8" fill="#9a9a9a"/><rect x="2.7" y="125.88" width="2.6" height="0.8" fill="#8a8a8a"/><rect x="3.6" y="131.09" width="0.9" height="0.8" fill="#9a9a9a"/><text x="0" y="0" font-size="5.4" font-family="Liberation Sans" fill="#555" text-anchor="middle" transform="translate(4.1 136.70) rotate(-90) translate(0 1.9)">4</text><rect x="3.6" y="141.51" width="0.9" height="0.8" fill="#9a9a9a"/><rect x="2.7" y="146.72" width="2.6" height="0.8" fill="#8a8a8a"/><rect x="3.6" y="151.94" width="0.9" height="0.8" fill="#9a9a9a"/><text x="0" y="0" font-size="5.4" font-family="Liberation Sans" fill="#555" text-anchor="middle" transform="translate(4.1 157.55) rotate(-90) translate(0 1.9)">5</text><rect x="3.6" y="162.36" width="0.9" height="0.8" fill="#9a9a9a"/><rect x="2.7" y="167.58" width="2.6" height="0.8" fill="#8a8a8a"/><rect x="3.6" y="172.79" width="0.9" height="0.8" fill="#9a9a9a"/><text x="0" y="0" font-size="5.4" font-family="Liberation Sans" fill="#555" text-anchor="middle" transform="translate(4.1 178.40) rotate(-90) translate(0 1.9)">6</text><rect x="3.6" y="183.21" width="0.9" height="0.8" fill="#9a9a9a"/><rect x="2.7" y="188.43" width="2.6" height="0.8" fill="#8a8a8a"/><rect x="3.6" y="193.64" width="0.9" height="0.8" fill="#9a9a9a"/><text x="0" y="0" font-size="5.4" font-family="Liberation Sans" fill="#555" text-anchor="middle" transform="translate(4.1 199.25) rotate(-90) translate(0 1.9)">7</text><rect x="3.6" y="204.06" width="0.9" height="0.8" fill="#9a9a9a"/><rect x="2.7" y="209.28" width="2.6" height="0.8" fill="#8a8a8a"/><rect x="3.6" y="214.49" width="0.9" height="0.8" fill="#9a9a9a"/><text x="0" y="0" font-size="5.4" font-family="Liberation Sans" fill="#555" text-anchor="middle" transform="translate(4.1 220.10) rotate(-90) translate(0 1.9)">8</text><rect x="3.6" y="224.91" width="0.9" height="0.8" fill="#9a9a9a"/><rect x="2.7" y="230.13" width="2.6" height="0.8" fill="#8a8a8a"/><rect x="3.6" y="235.34" width="0.9" height="0.8" fill="#9a9a9a"/><text x="0" y="0" font-size="5.4" font-family="Liberation Sans" fill="#555" text-anchor="middle" transform="translate(4.1 240.95) rotate(-90) translate(0 1.9)">9</text><rect x="3.6" y="245.76" width="0.9" height="0.8" fill="#9a9a9a"/><rect x="2.7" y="250.97" width="2.6" height="0.8" fill="#8a8a8a"/><rect x="3.6" y="256.19" width="0.9" height="0.8" fill="#9a9a9a"/><text x="0" y="0" font-size="5.4" font-family="Liberation Sans" fill="#555" text-anchor="middle" transform="translate(4.1 261.80) rotate(-90) translate(0 1.9)">10</text><rect x="3.6" y="266.61" width="0.9" height="0.8" fill="#9a9a9a"/><rect x="2.7" y="271.83" width="2.6" height="0.8" fill="#8a8a8a"/><rect x="3.6" y="277.04" width="0.9" height="0.8" fill="#9a9a9a"/><text x="0" y="0" font-size="5.4" font-family="Liberation Sans" fill="#555" text-anchor="middle" transform="translate(4.1 282.65) rotate(-90) translate(0 1.9)">11</text><rect x="3.6" y="287.46" width="0.9" height="0.8" fill="#9a9a9a"/><rect x="2.7" y="292.68" width="2.6" height="0.8" fill="#8a8a8a"/><rect x="3.6" y="297.89" width="0.9" height="0.8" fill="#9a9a9a"/><text x="0" y="0" font-size="5.4" font-family="Liberation Sans" fill="#555" text-anchor="middle" transform="translate(4.1 303.50) rotate(-90) translate(0 1.9)">12</text><rect x="3.6" y="308.31" width="0.9" height="0.8" fill="#9a9a9a"/><rect x="2.7" y="313.53" width="2.6" height="0.8" fill="#8a8a8a"/><rect x="3.6" y="318.74" width="0.9" height="0.8" fill="#9a9a9a"/><text x="0" y="0" font-size="5.4" font-family="Liberation Sans" fill="#555" text-anchor="middle" transform="translate(4.1 324.35) rotate(-90) translate(0 1.9)">13</text><rect x="3.6" y="329.16" width="0.9" height="0.8" fill="#9a9a9a"/></svg><div style="position:absolute;left:254.4px;top:162.50px;font-family:'Liberation Serif',serif;font-size:9.9px;line-height:11px;color:#111;font-weight:700;white-space:pre;">Tận dụng Style cho các thẻ Heading để tạo mục lục tự động</div><div style="position:absolute;left:253.5px;top:184px;width:347px;height:50.5px;background:#c8c8c8"></div><div style="position:absolute;left:253.5px;top:234.5px;width:110.5px;height:20px;background:#c8c8c8"></div><div style="position:absolute;left:253.5px;top:184.00px;width:344.5px;display:flex;justify-content:space-between;font-family:'Liberation Serif',serif;font-size:8.82px;line-height:10px;color:#111;white-space:pre;-webkit-text-stroke:0.12px #111"><span>Mục</span><span>lục</span><span>là</span><span>một</span><span>phần</span><span>quan</span><span>trọng</span><span>của</span><span>tài</span><span>liệu,</span><span>giúp</span><span>người</span><span>đọc</span><span>dễ</span><span>dàng</span><span>theo</span><span>dõi</span><span>bố</span><span>cục</span><span>và</span><span>nhanh</span></div><div style="position:absolute;left:253.5px;top:194.30px;width:344.5px;display:flex;justify-content:space-between;font-family:'Liberation Serif',serif;font-size:8.82px;line-height:10px;color:#111;white-space:pre;-webkit-text-stroke:0.12px #111"><span>chóng</span><span>tìm</span><span>kiếm</span><span>thông</span><span>tin</span><span>cần</span><span>thiết.</span><span>Thay</span><span>vì</span><span>phải</span><span>tạo</span><span>mục</span><span>lục</span><span>thủ</span><span>công,</span><span>Word</span><span>cung</span><span>cấp</span><span>cho</span><span>bạn</span></div><div style="position:absolute;left:253.5px;top:204.60px;width:344.5px;display:flex;justify-content:space-between;font-family:'Liberation Serif',serif;font-size:8.82px;line-height:10px;color:#111;white-space:pre;-webkit-text-stroke:0.12px #111"><span>một</span><span>công</span><span>cụ</span><span>vô</span><span>cùng</span><span>tiện</span><span>lợi</span><span>đó</span><span>là</span><span>Style</span><span>Heading.</span><span>Heading</span><span>Style</span><span>là</span><span>gì?</span><span>Word</span><span>cung</span><span>cấp</span><span>sẵn</span><span>một</span><span>hệ</span></div><div style="position:absolute;left:253.5px;top:214.90px;width:344.5px;display:flex;justify-content:space-between;font-family:'Liberation Serif',serif;font-size:8.82px;line-height:10px;color:#111;white-space:pre;-webkit-text-stroke:0.12px #111"><span>thống</span><span>các</span><span>Style</span><span>Heading</span><span>được</span><span>đánh</span><span>số</span><span>từ</span><span>1</span><span>đến</span><span>9,</span><span>bao</span><span>gồm</span><span>Heading</span><span>1,</span><span>Heading</span><span>2,</span><span>Heading</span><span>3,...</span></div><div style="position:absolute;left:253.5px;top:225.20px;width:344.5px;display:flex;justify-content:space-between;font-family:'Liberation Serif',serif;font-size:8.82px;line-height:10px;color:#111;white-space:pre;-webkit-text-stroke:0.12px #111"><span>Mỗi</span><span>Style</span><span>Heading</span><span>có</span><span>định</span><span>dạng</span><span>riêng</span><span>cho</span><span>tiêu</span><span>đề,</span><span>giúp</span><span>phân</span><span>cấp</span><span>các</span><span>phần</span><span>nội</span><span>dung</span><span>trong</span><span>bài</span><span>viết</span></div><div style="position:absolute;left:253.5px;top:235.50px;font-family:'Liberation Serif',serif;font-size:8.82px;line-height:10px;color:#111;white-space:pre;-webkit-text-stroke:0.12px #111">một cách rõ ràng và khoa học.</div><div style="position:absolute;left:253.5px;top:256.00px;width:344.5px;display:flex;justify-content:space-between;font-family:'Liberation Serif',serif;font-size:8.82px;line-height:10px;color:#111;white-space:pre;-webkit-text-stroke:0.12px #111"><span>Khi</span><span>bạn</span><span>áp</span><span>dụng</span><span>Style</span><span>Heading</span><span>cho</span><span>các</span><span>tiêu</span><span>đề</span><span>trong</span><span>bài</span><span>viết,</span><span>Word</span><span>có</span><span>thể</span><span>tự</span><span>động</span><span>tạo</span><span>mục</span><span>lục</span></div><div style="position:absolute;left:253.5px;top:266.12px;width:344.5px;display:flex;justify-content:space-between;font-family:'Liberation Serif',serif;font-size:8.82px;line-height:10px;color:#111;white-space:pre;-webkit-text-stroke:0.12px #111"><span>dựa</span><span>trên</span><span>các</span><span>Style</span><span>Heading</span><span>này.</span><span>Việc</span><span>sử</span><span>dụng</span><span>Style</span><span>Heading</span><span>giúp</span><span>đảm</span><span>bảo</span><span>định</span><span>dạng</span><span>tiêu</span><span>đề</span><span>trong</span></div><div style="position:absolute;left:253.5px;top:276.24px;width:344.5px;display:flex;justify-content:space-between;font-family:'Liberation Serif',serif;font-size:8.82px;line-height:10px;color:#111;white-space:pre;-webkit-text-stroke:0.12px #111"><span>bài</span><span>viết</span><span>được</span><span>thống</span><span>nhất,</span><span>tạo</span><span>sự</span><span>đồng</span><span>đều</span><span>và</span><span>chuyên</span><span>nghiệp</span><span>cho</span><span>tài</span><span>liệu.</span><span>Tất</span><span>nhiên</span><span>khi</span><span>bạn</span><span>thay</span></div><div style="position:absolute;left:253.5px;top:286.36px;width:344.5px;display:flex;justify-content:space-between;font-family:'Liberation Serif',serif;font-size:8.82px;line-height:10px;color:#111;white-space:pre;-webkit-text-stroke:0.12px #111"><span>đổi</span><span>định</span><span>dạng</span><span>của</span><span>Style</span><span>Heading,</span><span>tất</span><span>cả</span><span>các</span><span>tiêu</span><span>đề</span><span>được</span><span>áp</span><span>dụng</span><span>Style</span><span>Heading</span><span>đó</span><span>cũng</span><span>sẽ</span><span>được</span></div><div style="position:absolute;left:253.5px;top:296.48px;width:344.5px;display:flex;justify-content:space-between;font-family:'Liberation Serif',serif;font-size:8.82px;line-height:10px;color:#111;white-space:pre;-webkit-text-stroke:0.12px #111"><span>thay</span><span>đổi</span><span>tự</span><span>động.</span><span>Nhờ</span><span>vậy,</span><span>bạn</span><span>có</span><span>thể</span><span>dễ</span><span>dàng</span><span>chỉnh</span><span>sửa</span><span>định</span><span>dạng</span><span>tiêu</span><span>đề</span><span>mà</span><span>không</span><span>cần</span><span>phải</span><span>điều</span></div><div style="position:absolute;left:253.5px;top:306.60px;font-family:'Liberation Serif',serif;font-size:8.82px;line-height:10px;color:#111;white-space:pre;-webkit-text-stroke:0.12px #111">chỉnh từng tiêu đề một cách thủ công.</div><svg style="position:absolute;left:690px;top:70px;" width="26" height="26" viewBox="0 0 26 26"><circle cx="13" cy="12.2" r="10.4" fill="none" stroke="#d9302f" stroke-width="1.8"/></svg><div style="position:absolute;left:622.5px;top:106.3px;width:110.5px;height:280.2px;background:#e8e8e8;border:2px solid #e04646;box-sizing:border-box"></div><div style="position:absolute;left:629.5px;top:114.70px;font-family:'Liberation Sans',sans-serif;font-size:10.6px;line-height:12px;color:#444;font-weight:400;white-space:pre;">Styles</div><svg style="position:absolute;left:694px;top:117px;" width="8" height="6" viewBox="0 0 8 6"><path d="M0.6 0.8l3.4 3.6 3.4-3.6" fill="none" stroke="#555" stroke-width="0.8"/></svg><svg style="position:absolute;left:717.5px;top:117px;" width="7" height="6.5" viewBox="0 0 7 6.5"><path d="M0.6 0.6l5.6 5.4M6.2 0.6L0.6 6" fill="none" stroke="#555" stroke-width="0.8"/></svg><div style="position:absolute;left:628.8px;top:132.5px;width:98px;height:202.5px;background:#fff"></div><div style="position:absolute;left:717px;top:132.5px;width:10px;height:202.5px;background:#f0f0f0"></div><div style="position:absolute;left:717.5px;top:133.5px;width:8.5px;height:8px;background:#fff;border:1px solid #d0d0d0;box-sizing:border-box"></div><svg style="position:absolute;left:719.5px;top:135.5px;" width="5" height="4" viewBox="0 0 5 4"><path d="M0.5 3L2.3 0.8 4 3z" fill="#333"/></svg><div style="position:absolute;left:717.5px;top:161px;width:8.5px;height:164px;background:#fff;border:1px solid #d8d8d8;box-sizing:border-box"></div><div style="position:absolute;left:717.5px;top:327px;width:8.5px;height:7.5px;background:#fff;border:1px solid #d0d0d0;box-sizing:border-box"></div><svg style="position:absolute;left:719.5px;top:329px;" width="5" height="4" viewBox="0 0 5 4"><path d="M0.5 1L2.3 3.2 4 1z" fill="#333"/></svg><div style="position:absolute;left:634px;top:135.80px;font-family:'Liberation Sans',sans-serif;font-size:5.7px;line-height:6px;color:#222;font-weight:400;white-space:pre;">Clear All</div><div style="position:absolute;left:629.2px;top:144.3px;width:75.2px;height:11.4px;border:1.2px solid #6582b5;box-sizing:border-box"></div><div style="position:absolute;left:634px;top:147.70px;font-family:'Liberation Sans',sans-serif;font-size:5.7px;line-height:6px;color:#222;font-weight:400;white-space:pre;">Normal</div><div style="position:absolute;left:699px;top:147.70px;font-family:'Liberation Sans',sans-serif;font-size:5.8px;line-height:6px;color:#666;font-weight:400;white-space:pre;">¶</div><div style="position:absolute;left:634px;top:159.60px;font-family:'Liberation Sans',sans-serif;font-size:5.7px;line-height:6px;color:#222;font-weight:400;white-space:pre;">No Spacing</div><div style="position:absolute;left:699px;top:159.60px;font-family:'Liberation Sans',sans-serif;font-size:5.8px;line-height:6px;color:#666;font-weight:400;white-space:pre;">¶</div><div style="position:absolute;left:634px;top:171.30px;font-family:'Liberation Sans',sans-serif;font-size:5.7px;line-height:6px;color:#222;font-weight:400;white-space:pre;">Heading 1</div><div style="position:absolute;left:697.5px;top:170.90px;font-family:'Liberation Sans',sans-serif;font-size:5.0px;line-height:6px;color:#666;font-weight:400;white-space:pre;text-decoration:underline;letter-spacing:-0.3px">¶a</div><div style="position:absolute;left:634px;top:183.20px;font-family:'Liberation Sans',sans-serif;font-size:5.7px;line-height:6px;color:#222;font-weight:400;white-space:pre;">Heading 2</div><div style="position:absolute;left:697.5px;top:182.80px;font-family:'Liberation Sans',sans-serif;font-size:5.0px;line-height:6px;color:#666;font-weight:400;white-space:pre;text-decoration:underline;letter-spacing:-0.3px">¶a</div><div style="position:absolute;left:634px;top:195.10px;font-family:'Liberation Sans',sans-serif;font-size:5.7px;line-height:6px;color:#222;font-weight:400;white-space:pre;">Heading 3</div><div style="position:absolute;left:697.5px;top:194.70px;font-family:'Liberation Sans',sans-serif;font-size:5.0px;line-height:6px;color:#666;font-weight:400;white-space:pre;text-decoration:underline;letter-spacing:-0.3px">¶a</div><div style="position:absolute;left:634px;top:206.90px;font-family:'Liberation Sans',sans-serif;font-size:5.7px;line-height:6px;color:#222;font-weight:400;white-space:pre;">Heading 4</div><div style="position:absolute;left:697.5px;top:206.50px;font-family:'Liberation Sans',sans-serif;font-size:5.0px;line-height:6px;color:#666;font-weight:400;white-space:pre;text-decoration:underline;letter-spacing:-0.3px">¶a</div><div style="position:absolute;left:634px;top:218.80px;font-family:'Liberation Sans',sans-serif;font-size:5.7px;line-height:6px;color:#222;font-weight:400;white-space:pre;">Title</div><div style="position:absolute;left:697.5px;top:218.40px;font-family:'Liberation Sans',sans-serif;font-size:5.0px;line-height:6px;color:#666;font-weight:400;white-space:pre;text-decoration:underline;letter-spacing:-0.3px">¶a</div><div style="position:absolute;left:634px;top:230.70px;font-family:'Liberation Sans',sans-serif;font-size:5.7px;line-height:6px;color:#222;font-weight:400;white-space:pre;">Subtitle</div><div style="position:absolute;left:697.5px;top:230.30px;font-family:'Liberation Sans',sans-serif;font-size:5.0px;line-height:6px;color:#666;font-weight:400;white-space:pre;text-decoration:underline;letter-spacing:-0.3px">¶a</div><div style="position:absolute;left:634px;top:242.80px;font-family:'Liberation Sans',sans-serif;font-size:5.7px;line-height:6px;color:#222;font-weight:400;white-space:pre;">Subtle Emphasis</div><div style="position:absolute;left:700px;top:242.80px;font-family:'Liberation Sans',sans-serif;font-size:5.2px;line-height:6px;color:#666;font-weight:400;white-space:pre;">a</div><div style="position:absolute;left:634px;top:254.70px;font-family:'Liberation Sans',sans-serif;font-size:5.7px;line-height:6px;color:#222;font-weight:400;white-space:pre;">Emphasis</div><div style="position:absolute;left:700px;top:254.70px;font-family:'Liberation Sans',sans-serif;font-size:5.2px;line-height:6px;color:#666;font-weight:400;white-space:pre;">a</div><div style="position:absolute;left:634px;top:266.60px;font-family:'Liberation Sans',sans-serif;font-size:5.7px;line-height:6px;color:#222;font-weight:400;white-space:pre;">Intense Emphasis</div><div style="position:absolute;left:700px;top:266.60px;font-family:'Liberation Sans',sans-serif;font-size:5.2px;line-height:6px;color:#666;font-weight:400;white-space:pre;">a</div><div style="position:absolute;left:634px;top:278.70px;font-family:'Liberation Sans',sans-serif;font-size:5.7px;line-height:6px;color:#222;font-weight:400;white-space:pre;">Strong</div><div style="position:absolute;left:700px;top:278.70px;font-family:'Liberation Sans',sans-serif;font-size:5.2px;line-height:6px;color:#666;font-weight:400;white-space:pre;">a</div><div style="position:absolute;left:629.2px;top:287.5px;width:75.2px;height:11.4px;border:1.2px solid #6582b5;box-sizing:border-box"></div><div style="position:absolute;left:704.2px;top:287.6px;width:13.2px;height:11.2px;background:#fff;border:1px solid #b8b8b8;border-left:none;box-sizing:border-box"></div><svg style="position:absolute;left:708px;top:291.5px;" width="6" height="4" viewBox="0 0 6 4"><path d="M0.5 0.5h4.5L2.75 3z" fill="#222"/></svg><div style="position:absolute;left:634px;top:290.20px;font-family:'Liberation Sans',sans-serif;font-size:5.7px;line-height:6px;color:#222;font-weight:400;white-space:pre;">Quote</div><div style="position:absolute;left:697.5px;top:289.80px;font-family:'Liberation Sans',sans-serif;font-size:5.0px;line-height:6px;color:#666;font-weight:400;white-space:pre;text-decoration:underline;letter-spacing:-0.3px">¶a</div><div style="position:absolute;left:634px;top:302.40px;font-family:'Liberation Sans',sans-serif;font-size:5.7px;line-height:6px;color:#222;font-weight:400;white-space:pre;">Intense Quote</div><div style="position:absolute;left:697.5px;top:302.00px;font-family:'Liberation Sans',sans-serif;font-size:5.0px;line-height:6px;color:#666;font-weight:400;white-space:pre;text-decoration:underline;letter-spacing:-0.3px">¶a</div><div style="position:absolute;left:634px;top:314.50px;font-family:'Liberation Sans',sans-serif;font-size:5.7px;line-height:6px;color:#222;font-weight:400;white-space:pre;">Subtle Reference</div><div style="position:absolute;left:700px;top:314.50px;font-family:'Liberation Sans',sans-serif;font-size:5.2px;line-height:6px;color:#666;font-weight:400;white-space:pre;">a</div><div style="position:absolute;left:634px;top:326.50px;font-family:'Liberation Sans',sans-serif;font-size:5.7px;line-height:6px;color:#222;font-weight:400;white-space:pre;">Intense Reference</div><div style="position:absolute;left:700px;top:326.50px;font-family:'Liberation Sans',sans-serif;font-size:5.2px;line-height:6px;color:#666;font-weight:400;white-space:pre;">a</div><div style="position:absolute;left:629.6px;top:338.6px;width:7px;height:7px;background:#fff;border:1px solid #a8a8a8;box-sizing:border-box"></div><div style="position:absolute;left:639px;top:338.60px;font-family:'Liberation Sans',sans-serif;font-size:6.4px;line-height:7px;color:#333;font-weight:400;white-space:pre;">Show Preview</div><div style="position:absolute;left:629.6px;top:351.2px;width:7px;height:7px;background:#fff;border:1px solid #a8a8a8;box-sizing:border-box"></div><div style="position:absolute;left:639px;top:351.20px;font-family:'Liberation Sans',sans-serif;font-size:6.4px;line-height:7px;color:#333;font-weight:400;white-space:pre;">Disable Linked Styles</div><div style="position:absolute;left:629.3px;top:363.4px;width:14px;height:13.4px;background:#fff;border:1px solid #d2d2d2;box-sizing:border-box"></div><div style="position:absolute;left:648.4px;top:363.4px;width:14px;height:13.4px;background:#fff;border:1px solid #d2d2d2;box-sizing:border-box"></div><div style="position:absolute;left:667.6px;top:363.4px;width:14px;height:13.4px;background:#fff;border:1px solid #d2d2d2;box-sizing:border-box"></div><svg style="position:absolute;left:632px;top:365.5px;" width="9" height="10" viewBox="0 0 9 10"><rect x="0.8" y="0.8" width="2.6" height="2.6" fill="none" stroke="#e0b860" stroke-width="0.7"/><path d="M2.5 5.5h2.2M3 7h1.7" stroke="#6a9ad0" stroke-width="0.8"/><path d="M5 9V4.5l3.2-2V9z" fill="#7aa6dc"/><path d="M6 9V4.2M7 9V3.6" stroke="#4a7fc0" stroke-width="0.5"/></svg><svg style="position:absolute;left:651px;top:365.5px;" width="9" height="10" viewBox="0 0 9 10"><path d="M0.8 6L3 1h1.2l1 4" fill="none" stroke="#9060b8" stroke-width="0.9"/><path d="M1.8 4h2.6" stroke="#9060b8" stroke-width="0.6"/><circle cx="6" cy="6.6" r="1.6" fill="none" stroke="#555" stroke-width="0.8"/><path d="M4.8 7.8L3.5 9.2" stroke="#555" stroke-width="0.9"/><path d="M5.5 3.5l2-2" stroke="#6a9ad0" stroke-width="0.7"/></svg><svg style="position:absolute;left:670.3px;top:365.5px;" width="9" height="10" viewBox="0 0 9 10"><path d="M0.8 6L3 1h1.2l1 4" fill="none" stroke="#9060b8" stroke-width="0.9"/><path d="M1.8 4h2.6" stroke="#9060b8" stroke-width="0.6"/><path d="M3.5 9l4.5-5 0.9 0.9-4.5 5z" fill="#7aa6dc"/><path d="M3.5 7.5l1.5 1.5" stroke="#4a7fc0" stroke-width="0.6"/></svg><div style="position:absolute;left:686.4px;top:363.4px;width:36.6px;height:13.4px;background:#fff;border:1px solid #d2d2d2;box-sizing:border-box"></div><div style="position:absolute;left:691px;top:366.40px;font-family:'Liberation Sans',sans-serif;font-size:6.4px;line-height:7px;color:#333;font-weight:400;white-space:pre;">Options...</div><div style="position:absolute;left:0px;top:440px;width:800px;height:10px;background:#f3f3f3"></div><div style="position:absolute;left:6.2px;top:442.30px;font-family:'Liberation Sans',sans-serif;font-size:5.8px;line-height:6px;color:#3d3d3d;font-weight:400;white-space:pre;">Page 1 of 1</div><div style="position:absolute;left:47.2px;top:442.30px;font-family:'Liberation Sans',sans-serif;font-size:5.8px;line-height:6px;color:#3d3d3d;font-weight:400;white-space:pre;">108 of 231 words</div><svg style="position:absolute;left:102px;top:441px;" width="9" height="8" viewBox="0 0 9 8"><path d="M1.5 4a3 3 0 0 1 5.5-1.5M7.5 4a3 3 0 0 1-5.5 1.5" fill="none" stroke="#555" stroke-width="0.8"/><path d="M6 1.2l1 1.4-1.6.5M3 6.8l-1-1.4 1.6-.5" fill="none" stroke="#555" stroke-width="0.7"/></svg><div style="position:absolute;left:111.5px;top:442.30px;font-family:'Liberation Sans',sans-serif;font-size:5.8px;line-height:6px;color:#3d3d3d;font-weight:400;white-space:pre;">Accessibility: Good to go</div><svg style="position:absolute;left:690.5px;top:442px;" width="9" height="7" viewBox="0 0 9 7"><path d="M0.8 0.8h3.2v5.4H0.8zM4.6 0.8h3.2v5.4H4.6z" fill="none" stroke="#777" stroke-width="0.7"/></svg><div style="position:absolute;left:706px;top:440px;width:21.7px;height:10px;background:#c8c8c8"></div><svg style="position:absolute;left:712.5px;top:441.5px;" width="9" height="7.5" viewBox="0 0 9 7.5"><rect x="0.6" y="0.6" width="7.5" height="6.5" fill="none" stroke="#777" stroke-width="0.7"/><path d="M2 3h5M2 4.8h5" stroke="#888" stroke-width="0.6"/></svg><svg style="position:absolute;left:734.5px;top:441.5px;" width="9" height="8" viewBox="0 0 9 8"><rect x="0.6" y="0.6" width="6" height="6" fill="none" stroke="#777" stroke-width="0.7"/><path d="M1.8 2.5h3.5M1.8 4.2h3.5" stroke="#888" stroke-width="0.6"/><path d="M6 5l2 2" stroke="#555" stroke-width="0.9"/></svg><div style="position:absolute;left:753.7px;top:445px;width:4px;height:0.8px;background:#666"></div><div style="position:absolute;left:761px;top:445px;width:39px;height:0.8px;background:#777"></div><div style="position:absolute;left:787px;top:442px;width:3.3px;height:6px;background:#444"></div></body></html>
